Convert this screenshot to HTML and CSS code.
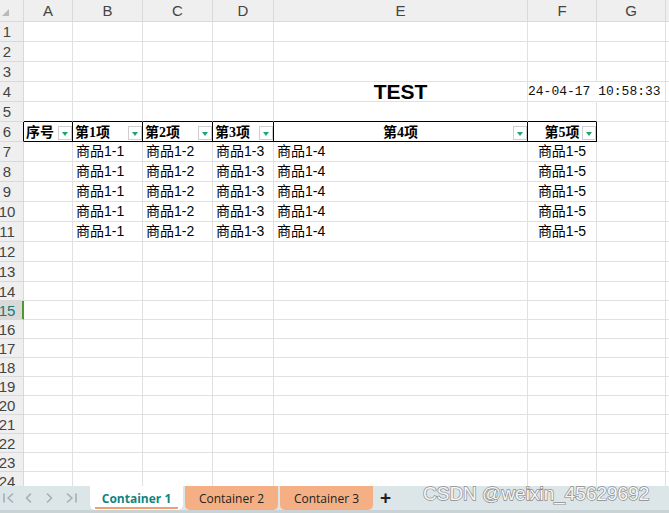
FILE: index.html
```html
<!DOCTYPE html>
<html lang="zh">
<head>
<meta charset="utf-8">
<title>Sheet</title>
<link rel="stylesheet" href="styles.css">
</head>
<body>
<div class="app">
  <div class="sheet">
    <div class="c h corner"><svg width="7" height="7" viewBox="0 0 7 7"><polygon points="7,0 7,7 0,7" fill="#b9b9b9"/></svg></div>
    <div class="c h">A</div><div class="c h">B</div><div class="c h">C</div><div class="c h">D</div><div class="c h">E</div><div class="c h">F</div><div class="c h">G</div><div class="c h"></div>

    <div class="c n">1</div><div class="c"></div><div class="c"></div><div class="c"></div><div class="c"></div><div class="c"></div><div class="c"></div><div class="c"></div><div class="c"></div>
    <div class="c n">2</div><div class="c"></div><div class="c"></div><div class="c"></div><div class="c"></div><div class="c"></div><div class="c"></div><div class="c"></div><div class="c"></div>
    <div class="c n">3</div><div class="c"></div><div class="c"></div><div class="c"></div><div class="c"></div><div class="c"></div><div class="c"></div><div class="c"></div><div class="c"></div>
    <div class="c n">4</div><div class="c"></div><div class="c"></div><div class="c"></div><div class="c"></div><div class="c title">TEST</div><div class="c ov date">24-04-17 10:58:33</div><div class="c"></div><div class="c"></div>
    <div class="c n">5</div><div class="c tt"></div><div class="c tt"></div><div class="c tt"></div><div class="c tt"></div><div class="c tt"></div><div class="c tt"></div><div class="c"></div><div class="c"></div>
    <div class="c n nb">6</div>
    <div class="c th">序号<span class="dd"></span></div>
    <div class="c th">第1项<span class="dd"></span></div>
    <div class="c th">第2项<span class="dd"></span></div>
    <div class="c th">第3项<span class="dd"></span></div>
    <div class="c th mid">第4项<span class="dd"></span></div>
    <div class="c th mid">第5项<span class="dd"></span></div>
    <div class="c"></div><div class="c"></div>

    <div class="c n">7</div><div class="c"></div><div class="c d">商品1-1</div><div class="c d">商品1-2</div><div class="c d">商品1-3</div><div class="c d">商品1-4</div><div class="c d mid">商品1-5</div><div class="c"></div><div class="c"></div>
    <div class="c n">8</div><div class="c"></div><div class="c d">商品1-1</div><div class="c d">商品1-2</div><div class="c d">商品1-3</div><div class="c d">商品1-4</div><div class="c d mid">商品1-5</div><div class="c"></div><div class="c"></div>
    <div class="c n">9</div><div class="c"></div><div class="c d">商品1-1</div><div class="c d">商品1-2</div><div class="c d">商品1-3</div><div class="c d">商品1-4</div><div class="c d mid">商品1-5</div><div class="c"></div><div class="c"></div>
    <div class="c n">10</div><div class="c"></div><div class="c d">商品1-1</div><div class="c d">商品1-2</div><div class="c d">商品1-3</div><div class="c d">商品1-4</div><div class="c d mid">商品1-5</div><div class="c"></div><div class="c"></div>
    <div class="c n">11</div><div class="c"></div><div class="c d">商品1-1</div><div class="c d">商品1-2</div><div class="c d">商品1-3</div><div class="c d">商品1-4</div><div class="c d mid">商品1-5</div><div class="c"></div><div class="c"></div>

    <div class="c n">12</div><div class="c"></div><div class="c"></div><div class="c"></div><div class="c"></div><div class="c"></div><div class="c"></div><div class="c"></div><div class="c"></div>
    <div class="c n">13</div><div class="c"></div><div class="c"></div><div class="c"></div><div class="c"></div><div class="c"></div><div class="c"></div><div class="c"></div><div class="c"></div>
    <div class="c n">14</div><div class="c"></div><div class="c"></div><div class="c"></div><div class="c"></div><div class="c"></div><div class="c"></div><div class="c"></div><div class="c"></div>
    <div class="c n sel">15</div><div class="c"></div><div class="c"></div><div class="c"></div><div class="c"></div><div class="c"></div><div class="c"></div><div class="c"></div><div class="c"></div>
    <div class="c n">16</div><div class="c"></div><div class="c"></div><div class="c"></div><div class="c"></div><div class="c"></div><div class="c"></div><div class="c"></div><div class="c"></div>
    <div class="c n">17</div><div class="c"></div><div class="c"></div><div class="c"></div><div class="c"></div><div class="c"></div><div class="c"></div><div class="c"></div><div class="c"></div>
    <div class="c n">18</div><div class="c"></div><div class="c"></div><div class="c"></div><div class="c"></div><div class="c"></div><div class="c"></div><div class="c"></div><div class="c"></div>
    <div class="c n">19</div><div class="c"></div><div class="c"></div><div class="c"></div><div class="c"></div><div class="c"></div><div class="c"></div><div class="c"></div><div class="c"></div>
    <div class="c n">20</div><div class="c"></div><div class="c"></div><div class="c"></div><div class="c"></div><div class="c"></div><div class="c"></div><div class="c"></div><div class="c"></div>
    <div class="c n">21</div><div class="c"></div><div class="c"></div><div class="c"></div><div class="c"></div><div class="c"></div><div class="c"></div><div class="c"></div><div class="c"></div>
    <div class="c n">22</div><div class="c"></div><div class="c"></div><div class="c"></div><div class="c"></div><div class="c"></div><div class="c"></div><div class="c"></div><div class="c"></div>
    <div class="c n">23</div><div class="c"></div><div class="c"></div><div class="c"></div><div class="c"></div><div class="c"></div><div class="c"></div><div class="c"></div><div class="c"></div>
    <div class="c n">24</div><div class="c"></div><div class="c"></div><div class="c"></div><div class="c"></div><div class="c"></div><div class="c"></div><div class="c"></div><div class="c"></div>
  </div>

  <div class="tabbar">
    <div class="nav">
      <svg width="90" height="24" viewBox="0 0 90 24">
        <g fill="none" stroke="#a6aeb2" stroke-width="1.6" stroke-linecap="round" stroke-linejoin="round">
          <line x1="4" y1="8" x2="4" y2="16"/>
          <polyline points="12.5,8 8,12 12.5,16"/>
          <polyline points="30.5,8 26.5,12 30.5,16"/>
          <polyline points="47.5,8 51.5,12 47.5,16"/>
          <polyline points="67.5,8 72,12 67.5,16"/>
          <line x1="76" y1="8" x2="76" y2="16"/>
        </g>
      </svg>
    </div>
    <div class="tab active">Container 1</div>
    <div class="tab">Container 2</div>
    <div class="tab">Container 3</div>
    <div class="plus">+</div>
  </div>
  <div class="watermark">CSDN @weixin_45629692</div>
</div>
</body>
</html>
```

FILE: styles.css
```css
html, body {
  margin: 0;
  padding: 0;
  background: #fff;
  overflow: hidden;
}
.app {
  position: relative;
  width: 669px;
  height: 513px;
  overflow: hidden;
  font-family: "Liberation Sans", "Noto Sans CJK SC", sans-serif;
}
.sheet {
  height: 486px;
  overflow: hidden;
  display: grid;
  grid-template-columns: 24px 49px 70px 70px 61px 254px 69px 69px 1fr;
  grid-template-rows: 22px repeat(13, 20px) repeat(11, 19px);
}
.c {
  box-sizing: border-box;
  border-right: 1px solid #e1e1e1;
  border-bottom: 1px solid #e1e1e1;
  display: flex;
  align-items: center;
  padding-left: 3px;
  font-size: 14px;
  color: #000;
  white-space: nowrap;
  overflow: hidden;
  position: relative;
}
.d {
  padding-bottom: 3px;
}
.h {
  background: #efefef;
  border-color: #d9d9d9;
  justify-content: center;
  padding-left: 0;
  color: #444;
  font-size: 15px;
}
.corner {
  justify-content: flex-start;
  align-items: flex-start;
  padding: 9px 0 0 2px;
}
.n {
  background: #efefef;
  border-color: #d9d9d9;
  justify-content: center;
  padding: 0 9px 0 0;
  color: #444;
  font-size: 15px;
  overflow: visible;
}
.n.sel {
  background: #d9d9d9;
  color: #127c78;
  border-right-color: #4a9a2c;
  box-shadow: inset -1px 0 0 #4a9a2c;
}
.n.nb {
  border-right-color: #000;
}
.title {
  justify-content: center;
  padding-left: 0;
  font-weight: bold;
  font-size: 21px;
  overflow: visible;
}
.ov {
  overflow: visible;
  border-right-color: transparent;
  z-index: 1;
}
.date {
  padding-left: 0;
  font-family: "Liberation Mono", monospace;
  font-size: 13px;
  color: #111;
}
.tt {
  border-bottom-color: #000;
}
.th {
  border-right-color: #000;
  border-bottom-color: #000;
  font-weight: bold;
  font-family: "Liberation Serif", "Noto Sans CJK SC", serif;
  font-size: 14px;
  padding-left: 2px;
  padding-bottom: 2px;
}
.mid {
  justify-content: center;
  padding-left: 0;
}
.dd {
  position: absolute;
  right: 0;
  bottom: 1px;
  width: 14px;
  height: 14px;
  box-sizing: border-box;
  border: 1px solid #cfcfcf;
  background: #fff;
}
.dd::after {
  content: "";
  position: absolute;
  left: 3px;
  top: 5px;
  border-left: 3.5px solid transparent;
  border-right: 3.5px solid transparent;
  border-top: 4px solid #1fa56d;
}
.tabbar {
  height: 24px;
  background: #dce6e9;
  border-bottom: 3px solid #c9d2d5;
  display: flex;
  align-items: stretch;
}
.nav {
  width: 90px;
  display: flex;
  align-items: center;
}
.nav svg { display: block; }
.tab {
  width: 93px;
  margin-right: 2px;
  display: flex;
  align-items: center;
  justify-content: center;
  background: #f4b084;
  border-radius: 0 0 5px 5px;
  font-family: "Open Sans", "Liberation Sans", sans-serif;
  font-size: 12px;
  color: #222;
}
.tab.active {
  background: linear-gradient(#f1a06c, #f1a06c) no-repeat center bottom 1px / 83px 2px, #fff;
  color: #0f8581;
  font-weight: bold;
}
.plus {
  margin-left: 5px;
  display: flex;
  align-items: center;
  font-size: 19px;
  font-weight: bold;
  color: #222;
  font-family: "Liberation Sans", sans-serif;
}
.watermark {
  position: absolute;
  left: 423px;
  top: 483px;
  font-family: "Liberation Sans", sans-serif;
  font-size: 19px;
  line-height: 1.15;
  color: #f4f6f7;
  -webkit-text-stroke: 1.4px #8c8c8c;
  paint-order: stroke fill;
  white-space: nowrap;
}
```
